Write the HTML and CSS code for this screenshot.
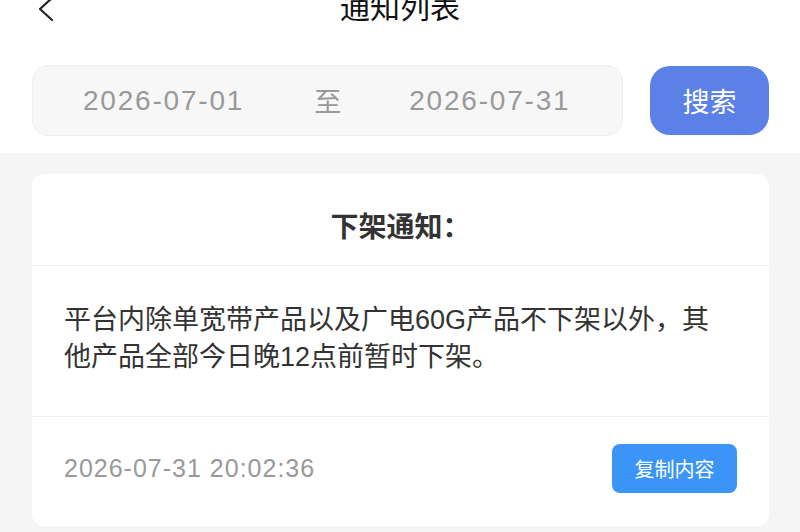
FILE: index.html
```html
<!DOCTYPE html>
<html lang="zh-CN">
<head>
    <meta charset="UTF-8">
    <meta name="viewport" content="width=device-width, initial-scale=1.0">
    <title>通知列表</title>
    <link rel="stylesheet" href="styles.css">
</head>
<body>
    <header class="nav-bar">
        <a class="back" href="#">
            <svg width="22" height="24" viewBox="0 0 22 24">
                <path d="M17 0 L5 11 L17 22" fill="none" stroke="#222" stroke-width="2.2" stroke-linecap="round" stroke-linejoin="round"/>
            </svg>
        </a>
        <h1>通知列表</h1>
    </header>

    <div class="search-row">
        <div class="date-range">
            <span class="date">2026-07-01</span>
            <span class="sep">至</span>
            <span class="date">2026-07-31</span>
        </div>
        <button class="search-btn" type="button">搜索</button>
    </div>

    <main class="list">
        <div class="notice-card">
            <div class="notice-title">下架通知：</div>
            <div class="notice-body">平台内除单宽带产品以及广电60G产品不下架以外，其他产品全部今日晚12点前暂时下架。</div>
            <div class="notice-foot">
                <span class="notice-time">2026-07-31 20:02:36</span>
                <button class="copy-btn" type="button">复制内容</button>
            </div>
        </div>
    </main>
</body>
</html>
```

FILE: styles.css
```css
body {
    margin: 0;
    background-color: #f5f5f5;
    font-family: "Liberation Sans", "Noto Sans CJK SC", sans-serif;
    color: #333;
    overflow: hidden;
}
.nav-bar {
    margin-top: -20px;
    height: 56px;
    background-color: #fff;
    display: flex;
    align-items: center;
    justify-content: center;
    position: relative;
}
.nav-bar h1 {
    margin: 0;
    font-size: 30px;
    font-weight: normal;
    color: #111;
    line-height: 56px;
}
.back {
    position: absolute;
    left: 35px;
    top: 18px;
    display: block;
}
.search-row {
    background-color: #fff;
    display: flex;
    align-items: center;
    gap: 27px;
    padding: 29px 31px 17px 32px;
}
.date-range {
    flex: 1;
    height: 69px;
    background-color: #f7f7f7;
    border: 1px solid #efefef;
    border-radius: 16px;
    display: flex;
    align-items: center;
    padding-left: 50px;
    font-size: 28px;
    color: #999;
}
.date-range .date {
    letter-spacing: 1.8px;
}
.date-range .sep {
    margin: 0 68px 0 70px;
    font-size: 27px;
}
.search-btn {
    width: 119px;
    height: 69px;
    border: none;
    border-radius: 20px;
    background-color: #5b80e6;
    color: #fff;
    font-family: inherit;
    font-size: 27px;
}
.list {
    padding: 21px 31px 0 32px;
}
.notice-card {
    background-color: #fff;
    border-radius: 12px;
}
.notice-title {
    text-align: center;
    font-size: 28px;
    font-weight: bold;
    color: #333;
    line-height: 40px;
    padding: 34px 0 17px;
    border-bottom: 1px solid #eeeeee;
}
.notice-body {
    font-size: 27px;
    line-height: 37px;
    padding: 36px 40px 40px 32px;
    border-bottom: 1px solid #eeeeee;
}
.notice-foot {
    display: flex;
    align-items: center;
    justify-content: space-between;
    padding: 27px 32px 33px;
}
.notice-time {
    font-size: 25px;
    letter-spacing: 1px;
    color: #999;
}
.copy-btn {
    width: 125px;
    height: 49px;
    border: none;
    border-radius: 8px;
    background-color: #3a95f6;
    color: #fff;
    font-family: inherit;
    font-size: 20px;
}
```
